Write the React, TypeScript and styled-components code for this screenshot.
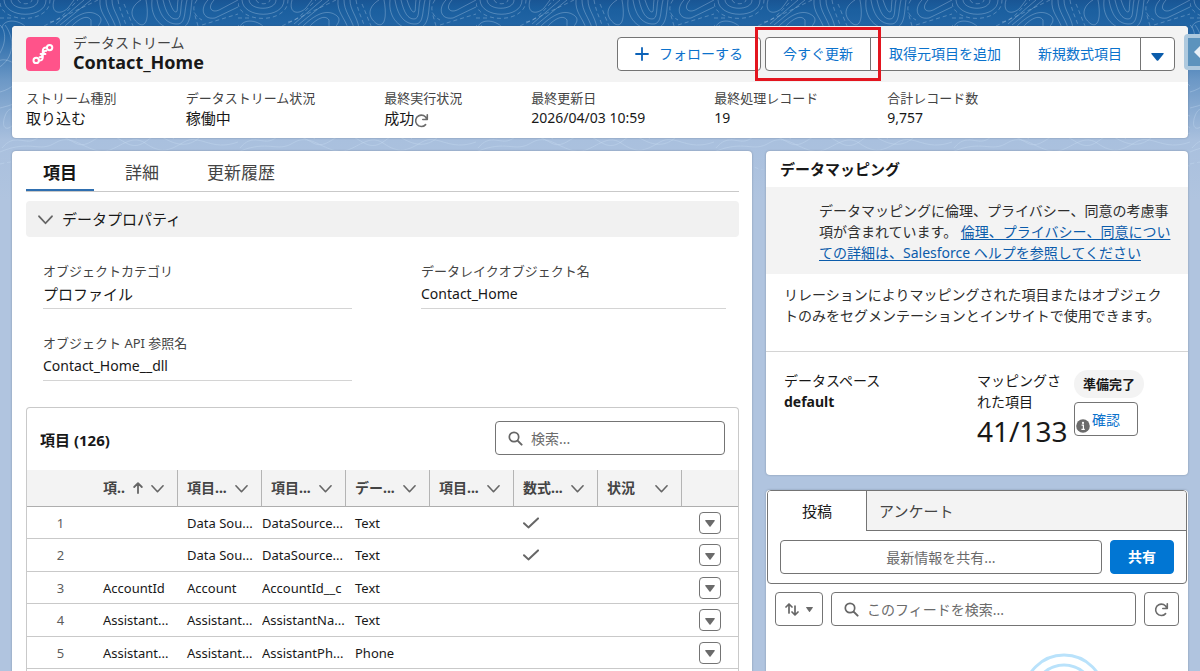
import React from "react";
import styled, { createGlobalStyle, css } from "styled-components";

const GlobalStyle = createGlobalStyle`
  *, *::before, *::after { box-sizing: border-box; }
  body {
    margin: 0;
    background: #b0c4df;
    color: #181818;
    font-family: "Noto Sans", "Noto Sans CJK JP", sans-serif;
    font-size: 14px;
    line-height: 20px;
  }
  button, input { font: inherit; color: inherit; margin: 0; }
  button { cursor: pointer; }
  h1, h2, p, dl, dd { margin: 0; }
  svg { display: block; flex: none; }
`;

const Page = styled.div`
  position: relative;
  height: 100vh;
  overflow: hidden;
  display: flex;
  flex-direction: column;
  gap: 13px;
  padding: 26px 12px 0;
`;

const Backdrop = styled.svg`
  position: absolute;
  inset: 0;
  width: 100%;
  height: 200px;
  z-index: -1;
`;

const Card = styled.section`
  background: #fff;
  border-radius: 4px;
  box-shadow: 0 0 2px rgba(60, 70, 90, 0.45);
  min-width: 0;
`;

/* ---------- record header ---------- */

const HeaderTop = styled.div`
  display: flex;
  align-items: center;
  gap: 13px;
  height: 56px;
  padding: 0 13px 0 14px;
  background: #f3f3f3;
  border-radius: 4px 4px 0 0;
`;

const StreamIcon = styled.span`
  display: grid;
  place-items: center;
  width: 34px;
  height: 34px;
  border-radius: 4px;
  background: #ff538a;
`;

const TitleBlock = styled.div`
  flex: 1;
  min-width: 0;
  padding-bottom: 2px;
`;

const EntityName = styled.p`
  line-height: 18px;
  color: #444;
`;

const RecordName = styled.h1`
  font-size: 18px;
  line-height: 20px;
  font-weight: 700;
`;

const Actions = styled.div`
  display: flex;
  gap: 4px;
`;

const buttonBase = css`
  display: inline-flex;
  align-items: center;
  justify-content: center;
  height: 34px;
  background: #fff;
  border: 1px solid #747474;
  border-radius: 4px;
  white-space: nowrap;
`;

const ActionButton = styled.button`
  ${buttonBase}
  gap: 10px;
  padding: 0 17px;
  color: #0b72cc;
`;

const ButtonGroup = styled.div`
  display: flex;

  ${ActionButton} { border-radius: 0; }
  & > ${ActionButton} { padding: 0 18px; }
  & > * + * { margin-left: -1px; }
  & > :first-child ${ActionButton} { border-radius: 4px 0 0 4px; }
  & > ${ActionButton}:last-child {
    width: 35px;
    padding: 6px 0 0;
    border-radius: 0 4px 4px 0;
  }
`;

const Highlighted = styled.span`
  position: relative;
  display: flex;

  &::after {
    content: "";
    position: absolute;
    inset: -10px;
    border: 3px solid #e3151f;
    pointer-events: none;
    z-index: 1;
  }
`;

const Stats = styled.dl`
  display: flex;
  gap: 69px;
  padding: 7px 14px 10px;
`;

const StatLabel = styled.dt`
  font-size: 13px;
  line-height: 18px;
  color: #444;
  white-space: nowrap;
`;

const StatValue = styled.dd<{ $latin?: boolean }>`
  display: flex;
  align-items: center;
  padding-top: 1px;
  font-size: ${(p) => (p.$latin ? 14 : 15)}px;
  line-height: 20px;
  white-space: nowrap;

  svg { margin-top: 4px; }
`;

const SideHandle = styled.button`
  position: absolute;
  top: 34px;
  right: -16px;
  width: 32px;
  height: 36px;
  padding: 0 0 0 6px;
  border: 4px solid rgba(255, 255, 255, 0.5);
  border-radius: 4px;
  background: #5c93bd;
`;

/* ---------- main columns ---------- */

const Columns = styled.main`
  flex: 1;
  min-height: 0;
  display: grid;
  grid-template-columns: minmax(0, 740fr) minmax(0, 422fr);
  gap: 14px;
`;

const RightColumn = styled.div`
  display: flex;
  flex-direction: column;
  gap: 15px;
  min-width: 0;
`;

const MainCard = styled(Card)`
  display: flex;
  flex-direction: column;
  border-radius: 4px 4px 0 0;
  padding: 0 13px 0 14px;
`;

const Tabs = styled.div`
  display: flex;
  gap: 14px;
  height: 41px;
  border-bottom: 1px solid #c9c9c9;
`;

const Tab = styled.button<{ $active?: boolean }>`
  height: 40px;
  padding: 6px 17px 0;
  border: 0;
  border-bottom: 2px solid ${(p) => (p.$active ? "#2f6fb0" : "transparent")};
  background: none;
  font-size: 17px;
  line-height: 24px;
  font-weight: ${(p) => (p.$active ? 700 : 400)};
  color: ${(p) => (p.$active ? "#181818" : "#444")};
`;

const SectionToggle = styled.button`
  display: flex;
  align-items: center;
  gap: 9px;
  height: 36px;
  margin-top: 9px;
  padding: 0 12px;
  border: 0;
  border-radius: 4px;
  background: #f1f1f1;
  font-size: 15px;
`;

const Fields = styled.dl`
  display: grid;
  grid-template-columns: 309fr 305fr;
  column-gap: 69px;
  row-gap: 24px;
  padding: 24px 13px 26px 17px;
`;

const Field = styled.div`
  align-self: start;
  padding-bottom: 4px;
  border-bottom: 1px solid #d4d4d4;
`;

const FieldLabel = styled(StatLabel)`
  line-height: 20px;
`;

const FieldValue = styled(StatValue)`
  padding-top: 3px;
`;

/* ---------- field list ---------- */

const ListPanel = styled.div`
  flex: 1;
  border: 1px solid #c9c9c9;
  border-bottom: 0;
  border-radius: 4px 4px 0 0;
`;

const ListHeader = styled.div`
  display: flex;
  align-items: center;
  justify-content: space-between;
  height: 62px;
  padding: 0 13px 2px;
`;

const ListTitle = styled.h2`
  font-size: 15px;
  font-weight: 700;
  padding-top: 4px;
`;

const SearchBox = styled.label<{ $wide?: boolean }>`
  ${buttonBase}
  justify-content: flex-start;
  gap: 8px;
  padding: 0 12px;
  width: 230px;
  color: #666;
  ${(p) => p.$wide && "flex: 1; width: auto; min-width: 0;"}
`;

const PlainInput = styled.input`
  flex: 1;
  min-width: 0;
  width: 100%;
  height: 30px;
  padding: 0;
  border: 0;
  outline: 0;
  background: transparent;
  &::placeholder { color: #6b6b6b; opacity: 1; }
`;

const Table = styled.table`
  width: 100%;
  table-layout: fixed;
  border-collapse: separate;
  border-spacing: 0;
  font-size: 13px;
`;

const IndexCol = styled.col`
  width: 67px;
`;

const MenuCol = styled.col`
  width: 56px;
`;

const HeadCell = styled.th<{ $ruled?: boolean }>`
  height: 37px;
  padding: 0 13px 0 9px;
  background: #f3f3f3;
  border-bottom: 1px solid #aeaeae;
  border-right: ${(p) => (p.$ruled ? "1px solid #b4b4b4" : "0")};
  font-size: 14px;
  font-weight: 700;
  color: #444;
  text-align: left;
`;

const HeadContent = styled.span`
  display: flex;
  align-items: center;
  justify-content: space-between;
  white-space: nowrap;
`;

const Row = styled.tr`
  height: 32px;
  &:nth-child(even) { height: 33px; }
`;

const Cell = styled.td<{ $flush?: boolean; $index?: boolean }>`
  padding: 0 0 0 ${(p) => (p.$flush ? 0 : 9)}px;
  border-bottom: 1px solid #c9c9c9;
  line-height: 20px;
  white-space: nowrap;
  overflow: hidden;
  ${(p) => p.$index && "padding: 0; text-align: center; color: #5c5c5c;"}
`;

const MenuButton = styled.button`
  ${buttonBase}
  display: flex;
  width: 22px;
  height: 22px;
  margin: 0 17px;
  padding: 2px 0 0;
`;

const MenuCell = styled(Cell)`
  padding: 0;
`;

/* ---------- data mapping ---------- */

const MappingTitle = styled.h2`
  height: 36px;
  padding: 8px 14px;
  font-size: 15px;
  font-weight: 700;
`;

const Notice = styled.p`
  padding: 13px 14px 11px 53px;
  background: #f3f3f3;
  line-height: 21px;
  color: #2e2e2e;

  a { color: #0b5cab; text-underline-offset: 2px; }
`;

const Explanation = styled.p`
  padding: 10px 14px 25px 18px;
  line-height: 21px;
  color: #2e2e2e;
  border-bottom: 1px solid #d4d4d4;
`;

const MappingRow = styled.div`
  display: grid;
  grid-template-columns: 193fr 97px 97fr;
  height: 123px;
  padding: 18px 17px 0 18px;
  line-height: 21px;
`;

const Strong = styled.strong`
  display: block;
`;

const Count = styled.div`
  font-size: 28px;
  line-height: 38px;
`;

const Pill = styled.span`
  display: block;
  width: max-content;
  padding: 4px 9px;
  margin-bottom: 4px;
  border-radius: 14px;
  background: #f3f3f3;
  font-size: 13px;
  line-height: 20px;
  font-weight: 700;
`;

const Confirm = styled.div`
  position: relative;
  width: max-content;

  & > svg {
    position: absolute;
    left: 2px;
    bottom: 3px;
  }
`;

/* ---------- feed ---------- */

const FeedCard = styled(Card)`
  flex: 1;
  border-radius: 4px 4px 0 0;
  overflow: hidden;
`;

const Publisher = styled.div`
  margin: 0 1px;
  border: 1px solid #747474;
  border-radius: 4px;
  overflow: hidden;
`;

const FeedTabs = styled.div`
  display: flex;
  height: 40px;
`;

const FeedTab = styled.button<{ $active?: boolean }>`
  border: 0;
  font-size: 15px;
  ${(p) =>
    p.$active
      ? "width: 98px; background: #fff;"
      : "flex: 1; padding: 0 12px; text-align: left; background: #f3f3f3; color: #444; border-left: 1px solid #747474; border-bottom: 1px solid #747474;"}
`;

const Composer = styled.div`
  display: flex;
  gap: 8px;
  padding: 9px 12px 9px;
`;

const ShareInput = styled.input`
  flex: 1;
  min-width: 0;
  height: 34px;
  padding: 0 12px;
  border: 1px solid #747474;
  border-radius: 4px;
  text-align: center;
  &::placeholder { color: #6b6b6b; opacity: 1; }
`;

const ShareButton = styled.button`
  ${buttonBase}
  width: 64px;
  border-color: #0176d3;
  background: #0176d3;
  color: #fff;
  font-weight: 700;
`;

const FeedTools = styled.div`
  display: flex;
  gap: 8px;
  padding: 8px 9px 0;
`;

const ToolButton = styled.button`
  ${buttonBase}
  gap: 7px;
  min-width: 34px;
  padding: 0 9px;
`;

const Loading = styled.div`
  display: flex;
  justify-content: center;
  padding: 27px 0 0 174px;
`;

/* ---------- icons ---------- */

const Chevron = ({ size = 13 }: { size?: number }) => (
  <svg width={size} height={size} viewBox="0 0 14 14" fill="none" stroke="#666" strokeWidth="1.7" strokeLinecap="round" strokeLinejoin="round">
    <path d="M1 4l6 6.5L13 4" />
  </svg>
);

const ArrowUp = () => (
  <svg width="10" height="12" viewBox="0 0 10 12" fill="none" stroke="#666" strokeWidth="1.8" strokeLinecap="round" strokeLinejoin="round">
    <path d="M5 11V1.5M1.2 5L5 1.2 8.8 5" />
  </svg>
);

const Caret = ({ width, height, color }: { width: number; height: number; color: string }) => (
  <svg width={width} height={height} viewBox="0 0 12 8" preserveAspectRatio="none">
    <path d="M.8 0h10.4q.9.2.4 1L6.7 7.4q-.7.8-1.4 0L.4 1Q-.1.2.8 0z" fill={color} />
  </svg>
);

const Magnifier = () => (
  <svg width="15" height="15" viewBox="0 0 15 15" fill="none" stroke="#666" strokeLinecap="round">
    <circle cx="6" cy="6" r="4.7" strokeWidth="1.7" />
    <path d="M9.6 9.6l4 4" strokeWidth="2" />
  </svg>
);

const Refresh = () => (
  <svg width="15" height="15" viewBox="0 0 15 15" fill="none" stroke="#6b6b6b" strokeWidth="1.6" strokeLinecap="round" strokeLinejoin="round">
    <path d="M13.3 1.8v4.7H8.8M12.8 6.2A5.7 5.7 0 1 0 11.6 11.6" />
  </svg>
);

const Check = () => (
  <svg width="16" height="12" viewBox="0 0 16 12" fill="none" stroke="#666" strokeWidth="2" strokeLinecap="round" strokeLinejoin="round">
    <path d="M1 6.2L5.4 10.4 15 1.4" />
  </svg>
);

const Plus = () => (
  <svg width="14" height="14" viewBox="0 0 14 14" stroke="#0b62b8" strokeWidth="1.8" strokeLinecap="round">
    <path d="M7 1v12M1 7h12" />
  </svg>
);

const SortArrows = () => (
  <svg width="14" height="13" viewBox="0 0 14 13" fill="none" stroke="#666" strokeWidth="1.7" strokeLinecap="round" strokeLinejoin="round">
    <path d="M4 10V1.2M1 4l3-3 3 3M10 3v8.8M7 9l3 3 3-3" />
  </svg>
);

const InfoDot = () => (
  <svg width="14" height="14" viewBox="0 0 14 14">
    <circle cx="7" cy="7" r="6.8" fill="#6b6b6b" />
    <circle cx="7" cy="3.9" r="1.1" fill="#fff" />
    <path d="M5.6 6.2h1.8v4M5.4 10.3h3.4" stroke="#fff" strokeWidth="1.2" fill="none" />
  </svg>
);

const StreamGlyph = () => (
  <svg width="22" height="22" viewBox="0 0 22 22" fill="none" stroke="#fff" strokeWidth="2" strokeLinecap="round">
    <circle cx="4.2" cy="17.4" r="2.7" />
    <circle cx="17.6" cy="4.6" r="2.7" />
    <path d="M7 17.6c2.600.2 3.800-1.200 3.800-3.600V8c0-2.400 1.300-3.600 3.900-3.400M8.600 11h4.800M7.600 14.200c1.200.2 2-.4 2.400-1.400M14.200 7.800c-1.200-.2-2 .4-2.400 1.400" />
  </svg>
);

const Rings = () => (
  <svg width="84" height="84" viewBox="0 0 84 84" fill="none" stroke="#b9e2fb" strokeWidth="3">
    <circle cx="42" cy="42" r="40" />
    <circle cx="42" cy="42" r="30" />
  </svg>
);

const Contours = () => (
  <Backdrop aria-hidden="true">
    <defs>
      <linearGradient id="sky" x1="0" y1="0" x2="0" y2="1">
        <stop offset="0" stopColor="#195594" />
        <stop offset="0.050" stopColor="#1b5f9f" />
        <stop offset="0.160" stopColor="#2467a7" />
        <stop offset="0.400" stopColor="#6c98c6" />
        <stop offset="0.700" stopColor="#a9c0de" />
        <stop offset="1" stopColor="#b0c4df" />
      </linearGradient>
      <pattern id="contour" width="238" height="200" patternUnits="userSpaceOnUse">
        <g fill="none" stroke="#cfe3f5" strokeOpacity="0.300" strokeWidth="1">
          <path d="M4 0C5 19 46 19 46 0M11 0C12 11 38 11 38 0" />
          <path d="M18 0C20 5 31 5 32 0M0 3C2 24 50 24 50 0" strokeDasharray="4 3" />
          <path d="M54 0C50 14 61 15 68 8L74 0M56 24L84 0M60 25L91 0" />
          <path d="M50 22C62 20 70 7 78 0M44 26L98 0" strokeDasharray="4 3" />
          <path d="M64 27C74 17 86 9 96 14S98 25 97 28M70 28C78 19 87 14 91 20V28M100 0C99 12 106 17 110 28M106 0C106 11 113 18 116 28M112 0C112 10 119 16 121 28" />
          <path d="M118 0C120 12 124 18 127 28M124 4C126 8 129 17 134 28" strokeDasharray="4 3" />
          <path d="M141 0C131 6 128 16 139 24C147 28 149 16 146 0M152 0C150 18 162 30 177 29S190 13 192 0M157 0C160 18 168 24 177 24S184 12 187 0M163 0C166 13 170 19 176 19S180 9 182 0M169 0C172 9 174 12 176 12S177 6 178 0" />
          <path d="M197 0C191 8 194 16 202 20M198 26L194 12" strokeDasharray="4 3" />
          <path d="M208 0C200 8 202 20 215 18L238 7M214 0C206 9 213 14 221 9L238 0" />
          <path d="M0 18H12M202 25L238 14" strokeDasharray="4 3" />
          <path d="M2 28C3 18 22 19 28 30M-2 56C8 42 5 29 0 25M-2 68C15 58 15 38 5 25M0 92C26 85 22 63 6 60S-7 82 0 87M0 108C22 103 38 93 50 82" />
          <path d="M5 116C10 102 21 112 15 122S0 130 5 116M2 148C15 132 25 146 36 139S45 130 61 136 78 150 94 140 108 133 126 143 150 130 162 137 188 150 202 135 220 140 238 133" />
          <path d="M0 152C30 139 39 153 55 143S82 148 99 151 129 132 145 143 169 151 184 142 211 152 238 142M20 138C42 127 63 127 77 139M126 138C138 128 162 127 174 139" />
          <path d="M0 164C30 157 34 166 48 170S78 160 99 166 149 158 174 168 211 160 238 166" strokeDasharray="4 3" />
          <path d="M214 38C230 54 220 70 238 86M222 30C238 50 228 64 238 70M206 96C220 104 226 114 238 116M210 118C220 126 230 120 238 128" />
        </g>
      </pattern>
    </defs>
    <rect width="100%" height="200" fill="url(#sky)" />
    <rect width="100%" height="170" fill="url(#contour)" />
  </Backdrop>
);

/* ---------- data ---------- */

const headings = ["項目...", "項目...", "デー...", "項目...", "数式...", "状況"];

const rows = [
  { label: "", name: "Data Sou...", api: "DataSource...", type: "Text", formula: true },
  { label: "", name: "Data Sou...", api: "DataSource...", type: "Text", formula: true },
  { label: "AccountId", name: "Account", api: "AccountId__c", type: "Text", formula: false },
  { label: "Assistant...", name: "Assistant...", api: "AssistantNa...", type: "Text", formula: false },
  { label: "Assistant...", name: "Assistant...", api: "AssistantPh...", type: "Phone", formula: false },
];

const stats = [
  { label: "ストリーム種別", value: "取り込む" },
  { label: "データストリーム状況", value: "稼働中" },
  { label: "最終実行状況", value: "成功", refresh: true },
  { label: "最終更新日", value: "2026/04/03 10:59", latin: true },
  { label: "最終処理レコード", value: "19", latin: true },
  { label: "合計レコード数", value: "9,757", latin: true },
];

const details = [
  { label: "オブジェクトカテゴリ", value: "プロファイル" },
  { label: "データレイクオブジェクト名", value: "Contact_Home", latin: true },
  { label: "オブジェクト API 参照名", value: "Contact_Home__dll", latin: true },
];

export default function App() {
  return (
    <Page>
      <GlobalStyle />
      <Contours />
      <Card as="header">
        <HeaderTop>
          <StreamIcon>
            <StreamGlyph />
          </StreamIcon>
          <TitleBlock>
            <EntityName>データストリーム</EntityName>
            <RecordName>Contact_Home</RecordName>
          </TitleBlock>
          <Actions>
            <ActionButton type="button">
              <Plus />
              フォローする
            </ActionButton>
            <ButtonGroup>
              <Highlighted>
                <ActionButton type="button">今すぐ更新</ActionButton>
              </Highlighted>
              <ActionButton type="button">取得元項目を追加</ActionButton>
              <ActionButton type="button">新規数式項目</ActionButton>
              <ActionButton type="button" aria-haspopup="menu" aria-label="その他のアクション">
                <Caret width={13} height={8} color="#0b5cab" />
              </ActionButton>
            </ButtonGroup>
          </Actions>
        </HeaderTop>
        <Stats>
          {stats.map((s) => (
            <div key={s.label}>
              <StatLabel>{s.label}</StatLabel>
              <StatValue $latin={s.latin}>
                {s.value}
                {s.refresh && <Refresh />}
              </StatValue>
            </div>
          ))}
        </Stats>
      </Card>

      <SideHandle type="button" aria-label="パネルを開く">
        <svg width="14" height="16" viewBox="0 0 14 16">
          <path d="M0 8l8-8v16z" fill="#e8f0f7" />
        </svg>
      </SideHandle>

      <Columns>
        <MainCard>
          <Tabs role="tablist">
            <Tab type="button" role="tab" aria-selected="true" $active>項目</Tab>
            <Tab type="button" role="tab">詳細</Tab>
            <Tab type="button" role="tab">更新履歴</Tab>
          </Tabs>
          <SectionToggle type="button" aria-expanded="true">
            <Chevron size={15} />
            データプロパティ
          </SectionToggle>
          <Fields>
            {details.map((d) => (
              <Field key={d.label}>
                <FieldLabel>{d.label}</FieldLabel>
                <FieldValue $latin={d.latin}>{d.value}</FieldValue>
              </Field>
            ))}
          </Fields>
          <ListPanel>
            <ListHeader>
              <ListTitle>項目 (126)</ListTitle>
              <SearchBox>
                <Magnifier />
                <PlainInput type="text" placeholder="検索..." />
              </SearchBox>
            </ListHeader>
            <Table>
              <colgroup>
                <IndexCol />
                <col span={7} />
                <MenuCol />
              </colgroup>
              <thead>
                <tr>
                  <HeadCell />
                  <HeadCell $ruled>
                    <HeadContent>
                      項..
                      <ArrowUp />
                      <Chevron />
                    </HeadContent>
                  </HeadCell>
                  {headings.map((h, i) => (
                    <HeadCell key={i} $ruled>
                      <HeadContent>
                        {h}
                        <Chevron />
                      </HeadContent>
                    </HeadCell>
                  ))}
                  <HeadCell />
                </tr>
              </thead>
              <tbody>
                {rows.map((r, i) => (
                  <Row key={i}>
                    <Cell $index>{i + 1}</Cell>
                    <Cell>{r.label}</Cell>
                    <Cell>{r.name}</Cell>
                    <Cell $flush>{r.api}</Cell>
                    <Cell>{r.type}</Cell>
                    <Cell />
                    <Cell>{r.formula && <Check />}</Cell>
                    <Cell />
                    <MenuCell>
                      <MenuButton type="button" aria-haspopup="menu" aria-label="行のアクション">
                        <Caret width={10} height={7} color="#6b6b6b" />
                      </MenuButton>
                    </MenuCell>
                  </Row>
                ))}
              </tbody>
            </Table>
          </ListPanel>
        </MainCard>

        <RightColumn>
          <Card>
            <MappingTitle>データマッピング</MappingTitle>
            <Notice>
              データマッピングに倫理、プライバシー、同意の考慮事項が含まれています。{" "}
              <a href="#help">倫理、プライバシー、同意についての詳細は、Salesforce ヘルプを参照してください</a>
            </Notice>
            <Explanation>
              リレーションによりマッピングされた項目またはオブジェクトのみをセグメンテーションとインサイトで使用できます。
            </Explanation>
            <MappingRow>
              <div>
                データスペース
                <Strong>default</Strong>
              </div>
              <div>
                マッピングされた項目
                <Count>41/133</Count>
              </div>
              <div>
                <Pill>準備完了</Pill>
                <Confirm>
                  <ActionButton type="button">確認</ActionButton>
                  <InfoDot />
                </Confirm>
              </div>
            </MappingRow>
          </Card>

          <FeedCard>
            <Publisher>
              <FeedTabs role="tablist">
                <FeedTab type="button" role="tab" aria-selected="true" $active>投稿</FeedTab>
                <FeedTab type="button" role="tab">アンケート</FeedTab>
              </FeedTabs>
              <Composer>
                <ShareInput type="text" placeholder="最新情報を共有..." aria-label="最新情報を共有" />
                <ShareButton type="button">共有</ShareButton>
              </Composer>
            </Publisher>
            <FeedTools>
              <ToolButton type="button" aria-label="並び替え">
                <SortArrows />
                <Caret width={7} height={5} color="#6b6b6b" />
              </ToolButton>
              <SearchBox $wide>
                <Magnifier />
                <PlainInput type="text" placeholder="このフィードを検索..." />
              </SearchBox>
              <ToolButton type="button" aria-label="更新">
                <Refresh />
              </ToolButton>
            </FeedTools>
            <Loading>
              <Rings />
            </Loading>
          </FeedCard>
        </RightColumn>
      </Columns>
    </Page>
  );
}
